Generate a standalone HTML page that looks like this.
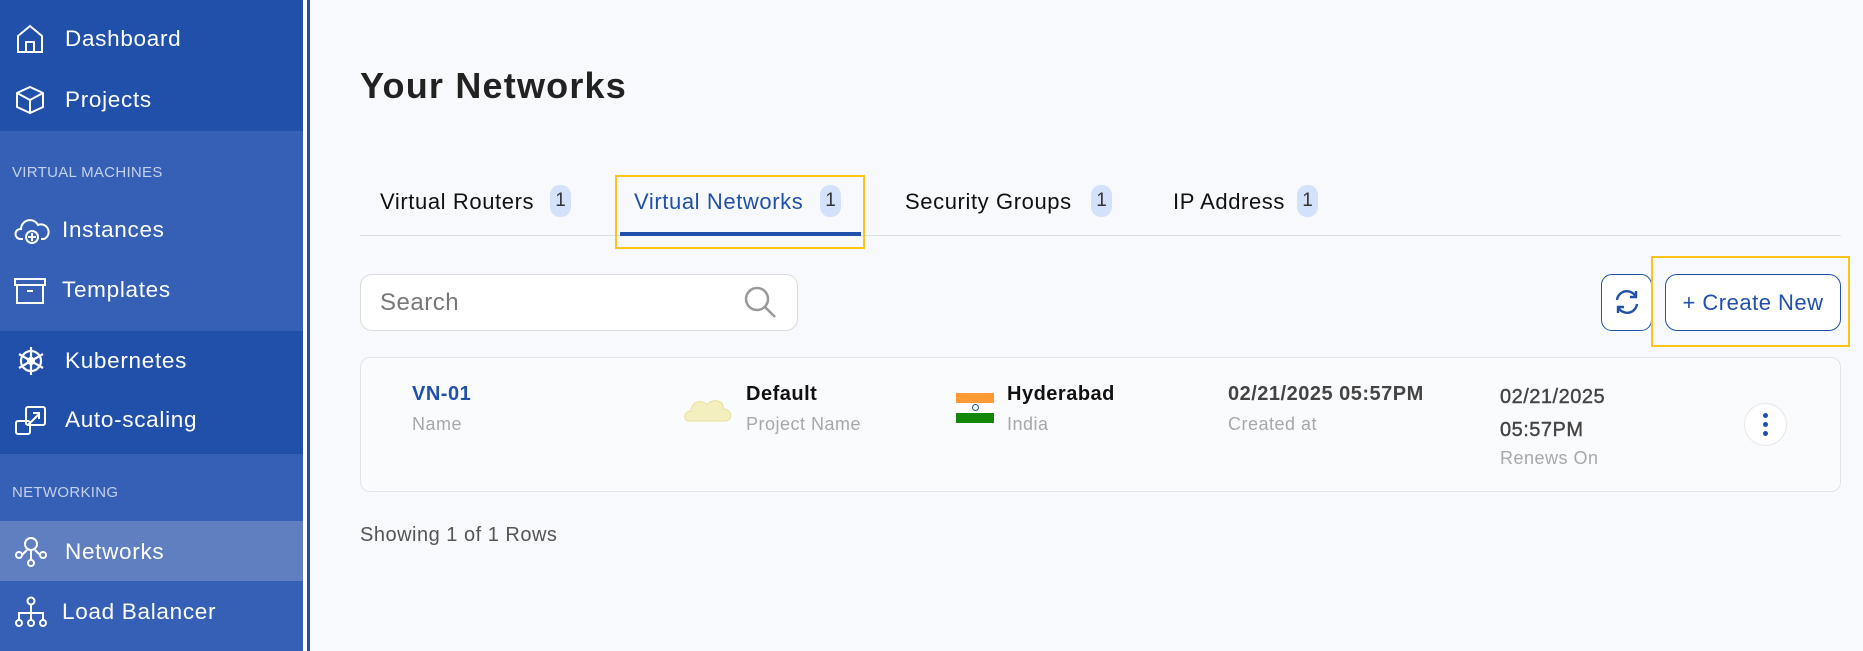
<!DOCTYPE html>
<html><head><meta charset="utf-8"><style>
*{box-sizing:border-box;margin:0;padding:0}
body{width:1863px;height:651px;overflow:hidden;background:#F8F9FC;font-family:"Liberation Sans",sans-serif;position:relative;letter-spacing:0.5px}
.sb{position:absolute;left:0;top:0;width:303px;height:651px;background:#3560B5}
.blk{position:absolute;left:0;width:303px}
.item{position:absolute;left:0;width:303px;height:58px;color:#fff;font-size:22.5px;display:flex;align-items:center;letter-spacing:0.7px}
.item span{position:absolute;left:65px}
.item svg{position:absolute;left:14px;top:12px}
.sec{position:absolute;left:12px;color:#C5D1EC;font-size:15px;letter-spacing:0.3px}
.abs{position:absolute}
.badge{position:absolute;width:21px;height:32px;border-radius:10px;background:#D3E2FA;color:#333;font-size:19px;text-align:center;line-height:32px;letter-spacing:0}
.tab{position:absolute;top:189px;font-size:22px;color:#111;letter-spacing:0.6px}
.lbl{color:#A8A8A8;font-size:18px;position:absolute}
.val{font-size:20px;font-weight:bold;position:absolute;color:#111}
</style></head><body>
<div class="sb">
<div class="blk" style="top:0;height:131px;background:#2150AA"></div>
<div class="blk" style="top:331px;height:123px;background:#2150AA"></div>
<div class="blk" style="top:521px;height:60px;background:#5F7FC0"></div>
<div class="item" style="top:10px"><svg width="32" height="34" viewBox="0 0 32 34" fill="none" stroke="#fff" stroke-width="2"><path d="M4 14 L16 4 L28 14 V30 H4 Z M12 30 V20 H20 V30"/></svg><span>Dashboard</span></div>
<div class="item" style="top:71px"><svg width="32" height="34" viewBox="0 0 32 34" fill="none" stroke="#fff" stroke-width="2"><path d="M16 4 L29 10 V24 L16 30 L3 24 V10 Z M3 10 L16 17 L29 10 M16 17 V30"/></svg><span>Projects</span></div>
<div class="sec" style="top:164px">VIRTUAL MACHINES</div>
<div class="item" style="top:201px"><svg width="36" height="34" viewBox="0 0 36 34" fill="none" stroke="#fff" stroke-width="2"><path d="M9 26 H6 A5 5 0 0 1 7 16 A9 9 0 0 1 24 12 A7 7 0 0 1 30 26 H27"/><circle cx="18" cy="24" r="6"/><path d="M18 20 V28 M14 24 H22"/></svg><span style="left:62px">Instances</span></div>
<div class="item" style="top:261px"><svg width="34" height="34" viewBox="0 0 34 34" fill="none" stroke="#fff" stroke-width="2"><path d="M1 6 H31 V12 H1 Z M3 12 V30 H29 V12 M13 18 H19"/></svg><span style="left:62px">Templates</span></div>
<div class="item" style="top:332px"><svg width="34" height="34" viewBox="0 0 34 34" fill="none" stroke="#fff" stroke-width="2.2"><circle cx="17" cy="17" r="10"/><circle cx="17" cy="17" r="3"/><path d="M17 3 V31 M5 10 L29 24 M5 24 L29 10"/></svg><span>Kubernetes</span></div>
<div class="item" style="top:391px"><svg width="34" height="34" viewBox="0 0 34 34" fill="none" stroke="#fff" stroke-width="2"><rect x="12" y="4" width="19" height="18" rx="2"/><rect x="2" y="18" width="14" height="13" rx="2"/><path d="M14 22 L25 11 M19 10 H25 V16"/></svg><span>Auto-scaling</span></div>
<div class="sec" style="top:484px">NETWORKING</div>
<div class="item" style="top:523px"><svg width="34" height="34" viewBox="0 0 34 34" fill="none" stroke="#fff" stroke-width="2"><circle cx="17" cy="9" r="6"/><circle cx="5" cy="20" r="3"/><circle cx="29" cy="20" r="3"/><circle cx="17" cy="28" r="3"/><path d="M17 15 V25 M8 20 L13 15 M26 20 L21 15"/></svg><span>Networks</span></div>
<div class="item" style="top:583px"><svg width="34" height="34" viewBox="0 0 34 34" fill="none" stroke="#fff" stroke-width="2"><circle cx="17" cy="6" r="3.5"/><circle cx="5" cy="28" r="3"/><circle cx="17" cy="28" r="3"/><circle cx="29" cy="28" r="3"/><path d="M17 10 V25 M5 25 V18 H29 V25"/></svg><span style="left:62px">Load Balancer</span></div>
</div>
<div class="abs" style="left:303px;top:0;width:4px;height:651px;background:#fff"></div>
<div class="abs" style="left:307px;top:0;width:3px;height:651px;background:#2150AA"></div>

<div class="abs" style="left:360px;top:65px;font-size:36px;font-weight:bold;color:#222;letter-spacing:1.2px">Your Networks</div>

<div class="tab" style="left:380px">Virtual Routers</div><div class="badge" style="left:550px;top:185px">1</div>
<div class="tab" style="left:634px;color:#2150AA">Virtual Networks</div><div class="badge" style="left:820px;top:185px">1</div>
<div class="tab" style="left:905px">Security Groups</div><div class="badge" style="left:1091px;top:185px">1</div>
<div class="tab" style="left:1173px">IP Address</div><div class="badge" style="left:1297px;top:185px">1</div>
<div class="abs" style="left:360px;top:235px;width:1481px;height:1px;background:#DCDFE4"></div>
<div class="abs" style="left:620px;top:232px;width:241px;height:4px;background:#2150AA"></div>
<div class="abs" style="left:615px;top:175px;width:250px;height:74px;border:2px solid #FCC419"></div>

<div class="abs" style="left:360px;top:274px;width:438px;height:57px;border:1px solid #D8DBE0;border-radius:12px;background:#fff"></div>
<div class="abs" style="left:380px;top:289px;font-size:24px;color:#777">Search</div>
<svg class="abs" style="left:742px;top:284px" width="36" height="36" viewBox="0 0 36 36" fill="none" stroke="#999" stroke-width="2.5"><circle cx="15" cy="15" r="11"/><path d="M23 23 L33 33"/></svg>

<div class="abs" style="left:1601px;top:274px;width:51px;height:57px;border:1px solid #2150AA;border-radius:11px;background:#fff"></div>
<svg class="abs" style="left:1612px;top:287px" width="30" height="30" viewBox="0 0 30 30" fill="none" stroke="#2150AA" stroke-width="2.4"><path d="M5 13 A10 10 0 0 1 24 10 M24 4 V10 H18 M25 17 A10 10 0 0 1 6 20 M6 26 V20 H12"/></svg>
<div class="abs" style="left:1665px;top:274px;width:176px;height:57px;border:1px solid #2150AA;border-radius:12px;background:#fff;color:#2150AA;font-size:22px;text-align:center;line-height:55px">+ Create New</div>
<div class="abs" style="left:1651px;top:256px;width:199px;height:91px;border:2px solid #FCC419"></div>

<div class="abs" style="left:360px;top:357px;width:1481px;height:135px;border:1px solid #E0E3E8;border-radius:10px;background:#FAFBFD"></div>
<div class="val" style="left:412px;top:383px;color:#2150AA">VN-01</div>
<div class="lbl" style="left:412px;top:414px">Name</div>
<svg class="abs" style="left:683px;top:393px" width="52" height="34" viewBox="0 0 52 34"><path d="M6 28 C0 28 0 18 8 18 C8 8 20 6 24 12 C30 4 42 8 40 16 C50 16 50 28 42 28 Z" fill="#F3EFBE" stroke="#E6DFA0"/></svg>
<div class="val" style="left:746px;top:383px">Default</div>
<div class="lbl" style="left:746px;top:414px">Project Name</div>
<div class="abs" style="left:956px;top:393px;width:38px;height:10px;background:#FF9933"></div>
<div class="abs" style="left:956px;top:403px;width:38px;height:10px;background:#fff"></div>
<div class="abs" style="left:972px;top:404px;width:7px;height:7px;border-radius:50%;border:1.5px solid #2150AA"></div>
<div class="abs" style="left:956px;top:413px;width:38px;height:10px;background:#138808"></div>
<div class="val" style="left:1007px;top:383px">Hyderabad</div>
<div class="lbl" style="left:1007px;top:414px">India</div>
<div class="val" style="left:1228px;top:383px;color:#444">02/21/2025 05:57PM</div>
<div class="lbl" style="left:1228px;top:414px">Created at</div>
<div class="val" style="left:1500px;top:381px;color:#444;line-height:33px;font-weight:normal;-webkit-text-stroke:0.4px #444">02/21/2025<br>05:57PM</div>
<div class="lbl" style="left:1500px;top:448px">Renews On</div>
<div class="abs" style="left:1744px;top:403px;width:43px;height:43px;border-radius:50%;border:1px solid #E6E8EC;background:#fff"></div>
<div class="abs" style="left:1763px;top:413px;width:5px;height:5px;border-radius:50%;background:#2150AA"></div>
<div class="abs" style="left:1763px;top:422px;width:5px;height:5px;border-radius:50%;background:#2150AA"></div>
<div class="abs" style="left:1763px;top:431px;width:5px;height:5px;border-radius:50%;background:#2150AA"></div>

<div class="abs" style="left:360px;top:524px;font-size:20px;color:#555">Showing 1 of 1 Rows</div>
</body></html>
